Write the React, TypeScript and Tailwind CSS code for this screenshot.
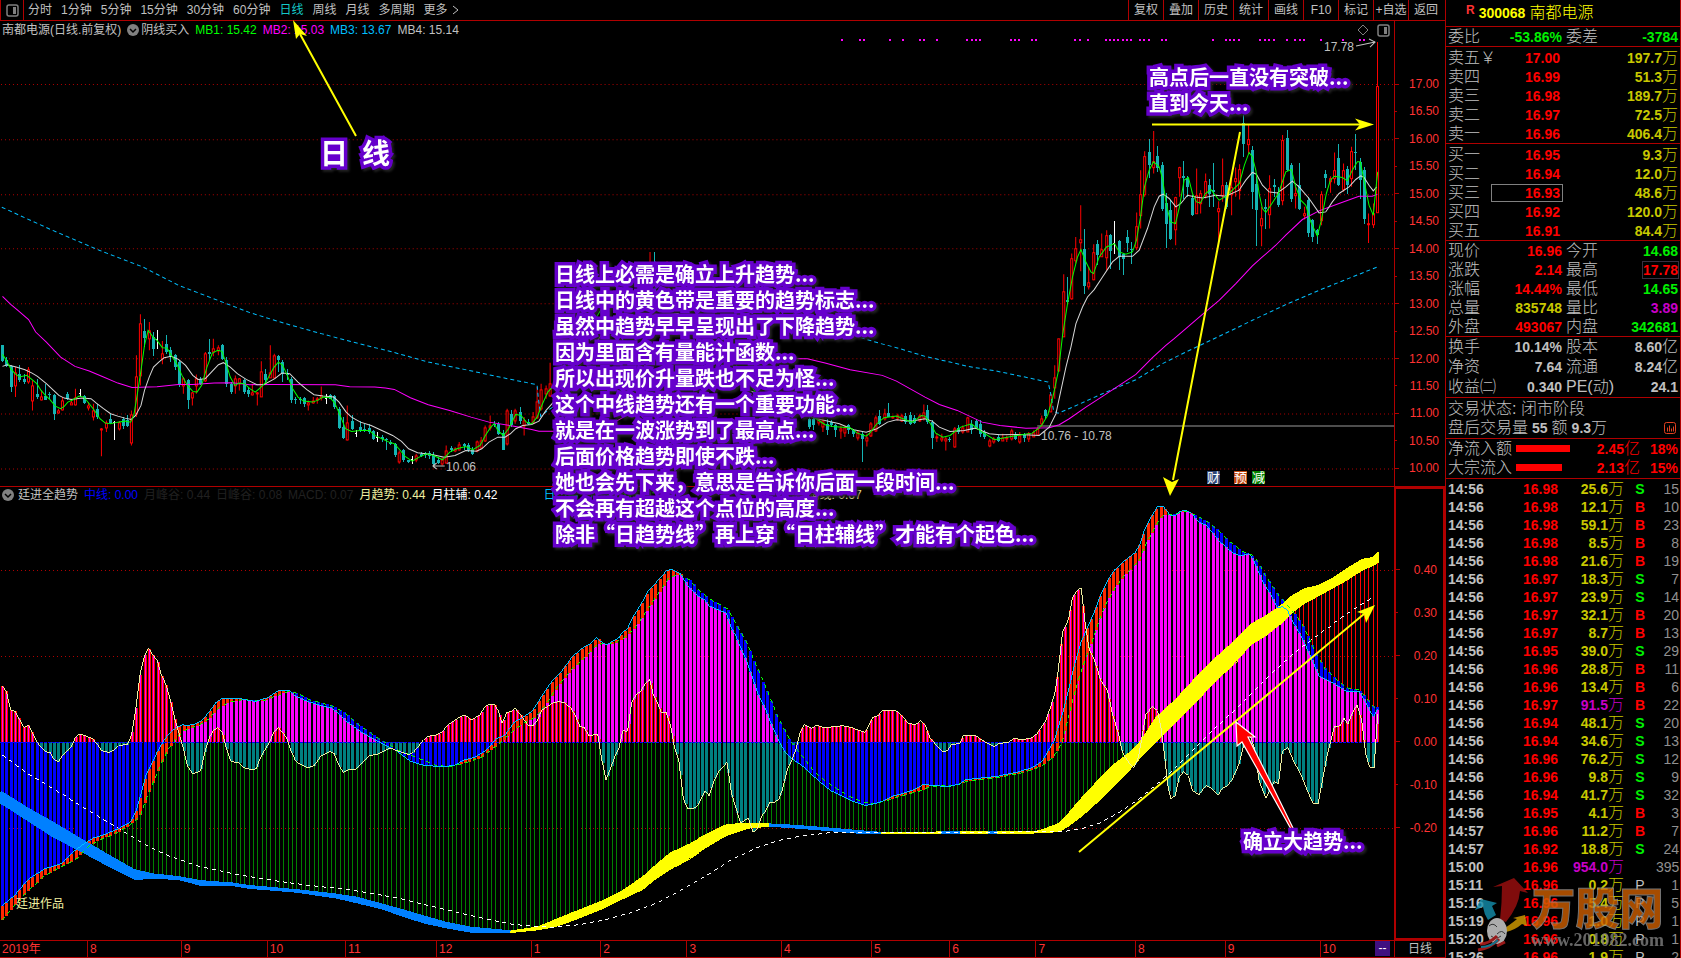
import { ReactNode } from "react";
import clsx from "clsx";

type Pt = [number, number];
type Candle = { x: number; hi: number; lo: number; top: number; bot: number; kind: string };

// points are stored on an enlarged grid: sx units per pixel across, 3 units per pixel down
const track = (ox: number, oy: number, sx: number, raw: string): Pt[] =>
  raw
    .trim()
    .split(/\s+/)
    .map((p) => {
      const [x, y] = p.split(",").map(Number);
      return [ox + x / sx, oy + y / 3];
    });

// kind + high,low,bodyTop,bodyBottom, spread evenly from x0 to x1
const candles = (x0: number, x1: number, oy: number, raw: string): Candle[] => {
  const rows = raw.trim().split(/\s+/);
  return rows.map((r, i) => {
    const [hi, lo, top, bot] = r.slice(1).split(",").map((v) => oy + Number(v) / 3);
    return { x: Math.round(x0 + ((x1 - x0) * i) / (rows.length - 1)), hi, lo, top, bot, kind: r[0] };
  });
};

const valueAt = (pts: Pt[], x: number) => {
  if (x <= pts[0][0]) return pts[0][1];
  for (let i = 1; i < pts.length; i++) {
    if (x <= pts[i][0]) {
      const [ax, ay] = pts[i - 1];
      const [bx, by] = pts[i];
      return bx === ax ? by : ay + ((by - ay) * (x - ax)) / (bx - ax);
    }
  }
  return pts[pts.length - 1][1];
};

const join = (pts: Pt[]) => pts.map((p) => `${p[0].toFixed(1)},${p[1].toFixed(1)}`).join(" ");

const CANDLES: Candle[] = [
  ...candles(2, 550, 250, `
    d283,335,283,332 d320,350,330,348 d345,425,348,410 u350,440,365,405 d345,395,370,390 d370,400,385,395 u350,400,358,395 u390,480,405,450
    d385,445,430,440 u420,450,437,445 d400,450,438,448 d425,445,430,435 d430,508,435,490 u475,490,480,487 u440,480,450,478 d425,450,430,447
    u445,462,455,462 u415,465,440,460 w417,440,427,430 d435,460,437,458 u455,480,465,472 u460,510,480,497 d460,505,475,500 u533,617,533,535
    u510,545,515,530 d490,520,505,518 w513,570,516,519 u512,540,515,532 d500,535,505,528 d495,530,510,528 u480,585,492,575 u315,500,378,490
    u192,405,220,375 d205,290,243,262 u215,300,240,265 d245,318,260,297 w240,297,265,268 u272,342,310,325 d255,310,282,305 d290,335,300,320
    d310,360,315,350 d330,410,335,400 u380,430,385,405 d385,477,390,450 u425,465,427,443 u372,430,385,405 d380,405,385,400 u305,395,310,390
    d267,330,305,312 u265,318,295,305 u285,315,290,300 d280,330,283,325 d320,410,328,400 d395,432,400,425 u375,430,385,405 u383,420,385,400
    d385,430,390,425 d410,440,420,430 u400,435,425,430 u425,465,427,430 u333,440,363,437 d355,395,370,390 u285,380,365,380 u310,385,315,380
    d315,365,316,330 d330,395,335,372 d355,390,368,375 d380,458,387,450 d440,460,447,450 d440,460,445,450 d440,470,442,460 u450,480,455,460
    u440,460,450,455 u440,460,443,447 u408,450,435,440 w430,460,443,446 d430,447,435,445 d435,475,437,470 d470,535,475,533 d500,565,530,562
    u465,570,515,565 d495,540,512,535 w540,560,548,551 d513,545,530,538 d520,545,535,538 d520,550,533,545 d540,570,543,565 w545,575,560,563
    d555,575,560,566 d563,600,565,570 d570,585,575,580 d578,620,580,615 u600,640,605,632 d595,635,600,630 d628,637,630,635 w617,640,627,630
    u610,635,615,628 d605,620,612,617 d605,622,608,615 d603,625,608,618 d605,650,615,642 d620,640,628,638 u620,645,628,640 u585,640,600,635
    d588,605,592,600 u590,605,593,598 u575,600,583,597 d578,600,582,586 d578,605,585,600 d590,615,600,612 u570,605,573,600 u560,595,570,590
    u525,575,530,568 u495,540,525,530 d513,530,520,525 d515,555,520,550 d540,600,548,598 u475,585,480,580 d480,530,490,525 u475,520,480,510
    d470,520,485,513 u500,555,510,525 d505,525,515,520 u485,520,498,517 u410,505,453,500 u400,480,418,475 u405,445,415,430 u337,440,400,437`),
  ...candles(650, 667, 250, `u5,120,60,110 d5,130,60,120 d60,140,70,130 u70,160,90,140 u33,140,60,120`),
  ...candles(810, 1038, 250, `
    d500,535,505,530 d500,540,505,525 u495,525,505,518 u500,545,510,528 d505,555,520,540 d510,530,515,525 d520,560,525,540 u525,565,535,540
    u525,560,530,545 d520,550,525,540 d535,560,540,550 u540,570,545,560 d545,635,550,565 u550,588,562,572 u515,560,520,555 u495,545,500,540
    d480,525,497,520 u475,510,490,505 d457,500,487,500 u495,505,497,500 u490,510,495,500 u490,515,495,510 d487,520,497,515 d485,525,495,520
    d495,520,503,517 u490,515,495,510 u462,510,485,500 d463,520,478,515 d510,595,515,563 u548,575,558,562 u550,575,560,565 u560,600,563,570
    d560,575,565,570 u530,592,535,590 d525,550,533,545 u525,550,530,543 u499,545,500,543 d510,550,520,540 d505,535,512,535 d510,560,520,550
    d540,565,545,560 u565,590,570,585 u560,580,565,575 d555,575,560,572 u550,570,560,568 u555,575,562,566 u535,570,540,565 d545,570,550,565
    u545,580,555,572 d548,575,553,562 u545,575,550,565 u540,560,545,558 u530,555,533,550`),
  ...candles(1042, 1378, 90, `
    u975,1010,985,1000 d955,985,960,978 u910,965,912,962 u825,925,862,892 u745,845,745,842 u552,740,603,738 d560,640,630,634 u490,628,505,625
    u440,520,475,510 u345,543,448,458 d415,610,475,588 u530,598,577,590 u462,570,485,565 d450,525,460,495 u430,500,478,498 u420,540,435,500
    d430,535,435,483 w393,490,458,461 d448,538,453,500 d488,555,490,507 d418,485,440,457 d455,522,475,480 u367,480,408,470 u240,415,313,375
    u183,320,198,312 d148,262,187,225 u123,250,213,230 d168,245,198,235 d215,362,225,355 d308,473,337,402 d330,450,360,447 u320,465,322,418
    u230,320,232,262 d213,325,258,262 d258,320,262,290 d315,378,323,375 u235,370,315,368 u300,370,310,340 u250,325,273,315 d267,350,285,312
    d220,350,300,305 u333,450,353,363 u205,335,285,315 d275,355,283,350 u265,375,290,312 u232,320,265,275 u222,328,238,300 d75,200,100,162
    u105,190,148,163 d168,355,180,305 d260,467,280,360 u350,468,385,405 d325,415,350,355 u255,415,293,370 d267,320,285,290 d290,350,308,343
    u135,345,150,330 d120,243,145,240 d220,335,225,327 u290,355,310,315 d220,358,285,355 u350,388,370,375 d320,440,330,428 d385,455,390,440
    d415,462,420,435 u303,405,312,390 d240,292,252,263 u258,308,263,272 u187,280,240,265 d163,288,205,285 u220,305,240,298 d228,312,237,285
    u170,290,183,265 d132,240,185,190 d205,325,215,270 d232,402,240,387 u370,458,400,403 u340,413,370,403 u-144,367,-12,366`),
];

const MB1: Pt[] = [
  ...track(0, 250, 2.8, `7,312 18,330 30,355 42,370 55,380 75,375 90,388 103,400 115,420 127,435 140,448 155,467 170,475 180,468 190,455 205,448 222,437 235,440
    250,460 265,480 280,505 295,518 310,520 330,515 350,512 366,515 375,495 385,430 395,360 405,285 415,240 430,262 440,270 455,292 468,293 480,315 495,340
    510,375 525,405 540,423 552,425 565,405 580,350 595,308 610,300 622,303 634,340 645,380 658,405 670,398 685,400 700,415 715,425 730,412 745,395 755,375
    768,350 780,335 792,345 805,375 820,415 835,440 850,452 875,455 890,450 905,440 925,442 938,458 955,500 968,535 985,543 1010,540 1035,540 1050,555
    1070,565 1090,575 1105,580 1120,598 1135,618 1155,632 1175,620 1195,610 1215,615 1240,628 1260,605 1280,595 1305,588 1325,598 1345,585 1360,555
    1375,530 1385,520 1395,540 1410,555 1425,535 1445,492 1460,495 1475,515 1490,520 1505,500 1520,460 1535,425 1560,395 1700,150 1850,120 2000,250 2120,430`),
  ...track(540, 250, 2.8, `775,505 800,523 820,528 850,530 870,532 890,548 915,557 925,548 945,520 965,502 1000,497 1030,510 1045,515 1070,495 1080,497 1095,520
    1110,548 1130,560 1150,555 1180,530 1210,520 1240,545 1275,568 1310,560 1350,553 1380,548 1397,535`),
  ...track(1020, 90, 3, `67,1005 85,975 100,925 118,840 130,735 145,640 160,560 175,500 185,478 200,515 215,545 223,550 240,500 262,470 286,460 300,485 320,492
    340,485 352,450 364,380 376,290 390,240 403,215 420,230 430,265 442,345 454,395 469,400 481,350 495,270 508,262 520,310 532,335 544,338 559,310 575,298
    600,330 622,318 640,300 661,280 676,225 690,187 700,200 710,240 720,310 730,355 740,367 755,345 778,310 800,245 817,238 830,290 845,330 860,345 875,395
    895,437 907,390 922,310 934,270 946,258 970,262 985,272 1000,240 1015,215 1024,215 1036,275 1050,345 1063,375 1070,300 1076,245`),
];

const MB4: Pt[] = [
  ...track(0, 250, 2.8, `7,348 20,343 45,350 70,358 90,368 105,378 130,400 150,420 165,435 180,443 200,447 230,443 255,445 270,458 290,475 310,490 330,497
    350,503 368,507 380,495 395,465 405,420 418,380 430,350 445,335 460,322 480,318 500,327 520,345 540,375 555,387 575,385 595,362 612,343 626,337 645,350
    665,370 690,387 720,403 740,402 770,385 790,368 812,370 835,395 860,418 880,433 905,437 935,440 950,455 970,485 985,500 1010,515 1040,525 1070,540
    1100,555 1125,573 1145,595 1170,607 1210,612 1245,620 1275,615 1305,600 1335,602 1350,595 1370,575 1395,560 1415,560 1430,550 1445,535 1465,525
    1490,522 1510,512 1530,480 1560,445 1720,200 1900,190 2100,420`),
  ...track(540, 250, 2.8, `770,503 800,510 840,520 880,538 915,545 945,535 975,515 1000,508 1040,512 1080,505 1100,512 1120,530 1150,543 1190,540 1220,533
    1260,550 1290,553 1340,552`),
  ...track(1020, 90, 3, `0,1032 60,1035 90,1010 110,970 125,900 140,830 155,770 170,700 190,650 205,620 225,598 250,560 280,515 300,498 340,498 360,480 385,415
    405,350 420,318 432,312 450,325 470,350 485,340 505,315 530,320 550,323 590,315 620,318 660,300 680,270 700,247 712,252 730,285 750,305 775,308 800,290
    820,273 840,290 870,325 900,368 920,365 940,335 960,310 990,290 1010,268 1025,257 1035,262 1050,285 1063,302 1073,290`),
];

const MB2: Pt[] = [
  ...track(0, 250, 2.8, `7,138 30,162 50,180 80,208 100,245 130,275 170,320 210,348 250,362 290,380 330,398 370,411 440,409 500,402 540,402 600,398 650,397
    700,403 760,402 940,403 980,409 1050,410 1080,413 1105,417 1150,442 1200,463 1260,480 1320,500 1370,515 1440,527 1490,537 1510,542 1560,542`),
  ...track(540, 250, 2.8, `215,512 480,357 600,325 725,325 750,325 800,338 870,358 960,375 1000,392 1050,422 1080,440 1120,462 1170,480 1240,515 1290,525
    1350,532`),
  ...track(1020, 90, 3, `20,1013 90,1012 120,1003 150,985 200,950 250,918 300,885 350,852 400,802 440,765 465,745 500,715 550,672 600,630 650,580 700,527 730,500
    770,465 800,435 850,388 900,362 960,340 1020,318 1060,318 1075,312`),
];

const MB3_LEFT = track(0, 250, 2.8, `5,-129 140,-63 278,0 400,50 500,105 630,158 700,187 800,220 900,250 1000,278 1100,305 1200,335 1300,357 1400,380 1500,402
  1505,405 1508,440 1515,498 1535,480 1556,465`);
const MB3_RIGHT: Pt[] = [
  ...track(540, 250, 2.8, `900,262 950,278 1000,292 1080,318 1150,335 1200,348 1280,362 1360,380 1425,395 1432,430 1440,480 1450,488`),
  ...track(1020, 90, 3, `118,968 160,950 250,910 350,868 430,820 500,785 600,738 700,690 800,643 900,600 1000,560 1075,530`),
];

const SIGNALS = [
  842, 860, 864, 890, 903, 920, 924, 937, 967, 972, 976, 980, 1011, 1015, 1019, 1032, 1036, 1075, 1080, 1088, 1106, 1110, 1114, 1118, 1123, 1127, 1131,
  1140, 1144, 1149, 1162, 1166, 1213, 1226, 1230, 1234, 1239, 1260, 1265, 1269, 1274, 1287, 1295, 1300, 1304, 1321, 1343, 1360, 1364,
];

const MONTH: Pt[] = [
  ...track(0, 640, 2.8, `7,135 18,153 30,207 43,212 55,237 67,260 80,253 92,280 103,303 115,320 127,333 140,335 150,355 163,364 175,345 187,330 199,320 211,290
    222,280 240,285 260,295 272,310 285,330 305,335 320,328 332,315 345,313 357,312 368,285 380,210 393,95 405,45 416,22 430,45 442,62 453,103 466,135
    478,180 490,235 502,280 513,320 525,375 540,400 552,395 562,390 575,330 587,290 598,270 610,260 622,272 634,320 646,360 658,365 670,366 682,380 706,388
    718,384 730,350 742,328 755,305 768,273 780,260 792,277 803,290 815,330 828,360 840,370 862,382 880,375 900,345 925,332 936,338 948,370 962,396 975,388
    998,385 1015,365 1034,345 1060,340 1094,322 1120,333 1145,342 1158,335 1170,320 1187,297 1200,287 1225,282 1240,272 1255,253 1275,238 1298,223
    1310,228 1322,238 1345,222 1358,198 1372,190 1385,190 1396,210 1407,248 1420,215 1432,213 1443,203 1458,220 1470,240 1480,253 1495,253 1505,240
    1520,205 1545,188`),
  ...track(500, 540, 2.8, `165,482 180,485 200,502 212,525 225,558 237,560 250,585 275,580 285,650 298,718 310,685 322,650 335,620 345,570 358,572 370,487
    382,462 395,452 407,430 420,415 430,460 442,485 453,515 467,515 480,560 490,620 502,660 515,775 527,805 542,805 555,795 575,750 587,765 600,722 612,695
    637,665 650,760 662,800 675,848 697,832 710,875 722,865 735,825 745,812 757,785 770,785 783,775 793,745 805,690 820,655 832,620 842,575 853,552 875,563
    888,553 905,562 960,555 985,560 1010,570 1025,575 1045,530 1060,525 1072,510 1105,508 1118,515 1145,547 1165,552 1180,540 1192,552 1205,590 1217,605
    1230,622 1242,632 1255,630 1265,612 1290,608 1300,583 1325,583 1340,590 1360,603 1385,618 1400,608 1425,605 1443,592 1460,598 1490,592 1505,580
    1530,540 1545,495 1556,455`),
  ...track(1000, 480, 3, `178,560 190,455 208,415 220,350 235,327 246,322 258,430 270,505 285,535 305,600 325,630 340,700 358,760 370,815 385,840 403,862
    418,830 430,760 440,700 460,678 475,690 485,740 497,830 505,910 515,955 528,945 540,890 553,873 568,885 580,930 600,942 620,915 640,925 657,943 668,925
    685,915 700,895 720,850 735,790 748,750 765,800 780,900 800,952 812,930 826,903 838,910 850,812 866,800 885,845 905,880 925,930 942,968 957,970 970,900
    985,820 997,775 1006,738 1023,735 1034,712 1047,730 1058,700 1074,672 1088,720 1100,820 1112,860 1125,862 1136,700`),
];

const TREND: Pt[] = [
  ...track(0, 640, 2.8, `7,795 40,765 80,715 125,685 170,670 215,625 245,603 262,592 290,583 330,565 365,545 380,515 395,460 410,400 425,370 440,335 460,297
    480,272 500,257 513,252 525,255 545,250 565,240 585,215 605,185 622,173 670,173 715,182 752,170 780,149 808,148 830,167 862,182 895,193 930,202 945,215
    975,245 1010,272 1060,303 1110,330 1150,362 1185,373 1240,379 1275,373 1300,358 1330,350 1360,330 1390,295 1415,283 1440,245 1465,230 1490,212
    1510,180 1540,130`),
  ...track(500, 540, 2.8, `167,398 200,350 237,318 255,308 272,290 285,303 300,312 335,290 345,272 358,265 370,235 395,192 418,147 440,123 467,90 480,85 505,97
    527,135 555,165 575,178 587,195 635,217 650,262 662,285 675,320 690,355 710,415 722,455 745,505 765,560 785,605 800,635 820,655 850,677 890,717 930,752
    980,778 1025,795 1065,785 1100,767 1140,755 1165,745 1190,730 1210,735 1260,737 1290,730 1305,717 1350,712 1396,707`),
  ...track(1000, 480, 3, `0,885 60,873 100,860 130,840 150,805 165,780 180,730 195,680 210,620 225,555 245,485 265,440 285,395 305,340 325,300 345,268 385,232
    408,215 422,190 435,150 455,110 475,77 492,76 505,92 515,105 530,103 540,92 560,88 575,95 590,113 605,127 620,132 640,155 660,180 700,215 725,225
    750,218 762,235 775,265 795,310 815,340 835,380 850,378 865,388 880,420 900,455 920,495 940,540 960,585 1005,608 1045,633 1080,632 1095,655 1110,685
    1123,708 1136,685`),
];

const SIGNAL: Pt[] = [
  ...track(0, 640, 2.8, `7,838 40,795 80,750 125,705 170,680 215,655 245,620 270,603 330,575 375,545 395,520 415,460 435,410 455,360 475,320 500,285 520,268
    560,253 585,235 610,205 640,185 680,177 740,180 775,165 808,152 835,158 870,178 930,195 965,215 1000,248 1060,293 1110,325 1165,350 1225,375 1260,377
    1300,368 1350,350 1385,320 1410,298 1440,268 1470,245 1500,230 1530,190`),
  ...track(500, 540, 2.8, `167,430 200,388 240,348 275,310 320,308 350,290 380,260 415,205 440,165 475,110 503,100 530,115 560,150 590,175 640,205 660,245
    690,300 720,375 750,450 780,530 815,600 850,650 880,690 910,720 960,755 1000,777 1040,790 1080,782 1120,768 1180,750 1210,737 1280,733 1310,722
    1360,715 1396,710`),
  ...track(1000, 480, 3, `0,890 60,878 100,867 130,855 150,840 165,825 180,800 190,780 205,720 220,660 240,590 260,530 280,480 300,420 320,370 345,325 375,285
    420,240 440,190 475,125 495,102 520,100 560,92 590,103 630,125 660,150 690,180 730,212 755,220 775,240 800,285 840,345 880,390 910,430 950,515 975,560
    1005,590 1040,620 1080,628 1110,660 1125,680 1137,680`),
];

const RIBBON_TOP: Pt[] = [
  ...track(0, 640, 2.8, `5,453 80,503 150,545 240,603 300,640 378,688 430,700 500,708 560,720 650,727 700,735 755,740 830,747 940,760 1000,770 1070,790
    1130,808 1190,827 1250,845 1320,860 1430,871`),
  ...track(500, 540, 2.8, `105,1160 150,1140 200,1118 285,1082 345,1050 405,1005 430,980 480,935 530,910 580,880 635,852 700,847 755,850 800,852 900,860
    1030,872 1070,875 1396,873`),
  ...track(1000, 480, 3, `110,1052 130,1047 180,1028 210,995 250,948 300,895 345,850 385,820 425,780 470,710 530,655 590,590 650,530 700,485 755,430 800,405
    850,370 880,343 920,322 955,315 1000,292 1040,265 1090,235 1120,230 1137,212`),
];

const RIBBON_BOTTOM: Pt[] = [
  ...track(0, 640, 2.8, `5,490 80,542 150,590 240,640 300,675 378,717 430,713 500,717 560,734 650,735 700,744 755,748 830,755 940,772 1000,787 1070,805
    1130,828 1190,848 1250,862 1320,875 1430,876`),
  ...track(500, 540, 2.8, `105,1168 150,1160 200,1142 285,1106 345,1075 405,1045 430,1020 480,985 530,955 580,920 635,885 700,862 755,857 800,860 900,868
    1030,880 1070,880 1396,878`),
  ...track(1000, 480, 3, `110,1057 130,1056 180,1053 210,1035 250,1005 300,960 345,915 385,875 425,830 470,785 530,725 590,665 650,600 700,555 755,492 800,465
    850,425 880,395 920,365 955,347 1000,322 1040,300 1090,268 1120,255 1137,245`),
];

const MIDLINE: Pt[] = [
  ...track(0, 640, 2.8, `7,343 75,397 150,445 240,505 330,562 400,608 470,645 560,678 670,703 780,722 870,735 970,746 1050,760 1120,774 1200,795 1280,815
    1360,835 1440,852 1500,857`),
  ...track(500, 540, 2.8, `150,1160 220,1153 300,1137 370,1115 440,1088 520,1042 580,1005 650,957 720,922 780,900 840,887 920,877 960,875 1396,875`),
  ...track(1000, 480, 3, `130,1053 190,1053 245,1045 300,1028 360,995 420,955 480,905 530,860 590,800 650,740 700,695 760,635 820,575 900,505 960,460 1020,415
    1080,375 1125,348`),
];

const RIBBON_SPANS: [number, number, string][] = [
  [1, 511, "#0080ff"],
  [511, 770, "#ffff00"],
  [770, 882, "#0080ff"],
  [882, 942, "#ffff00"],
  [942, 961, "#0080ff"],
  [961, 989, "#ffff00"],
  [989, 998, "#0080ff"],
  [998, 1379, "#ffff00"],
];

const ribbonPath = (from: number, to: number) => {
  const xs: number[] = [];
  for (let x = from; x < to; x += 3) xs.push(x);
  xs.push(to);
  const top = xs.map((x) => `${x},${valueAt(RIBBON_TOP, x).toFixed(1)}`);
  const bottom = xs.reverse().map((x) => `${x},${valueAt(RIBBON_BOTTOM, x).toFixed(1)}`);
  return [...top, ...bottom].join(" ");
};

const ZERO = 741;
const BARS = Array.from({ length: 319 }, (_, i) => Math.round(2 + (i * 1376) / 318));

const PERIODS = ["分时", "1分钟", "5分钟", "15分钟", "30分钟", "60分钟", "日线", "周线", "月线", "多周期"];
const TOOLS = ["复权", "叠加", "历史", "统计", "画线", "F10", "标记", "+自选", "返回"];

const MONTHS: [string, number, number][] = [
  ["2019年", 0, 88],
  ["8", 88, 182],
  ["9", 182, 268],
  ["10", 268, 346],
  ["11", 346, 437],
  ["12", 437, 532],
  ["1", 532, 601],
  ["2", 601, 687],
  ["3", 687, 782],
  ["4", 782, 872],
  ["5", 872, 950],
  ["6", 950, 1036],
  ["7", 1036, 1136],
  ["8", 1136, 1226],
  ["9", 1226, 1321],
  ["10", 1321, 1395],
];

const ASKS = [
  ["卖五￥", "17.00", "197.7"],
  ["卖四", "16.99", "51.3"],
  ["卖三", "16.98", "189.7"],
  ["卖二", "16.97", "72.5"],
  ["卖一", "16.96", "406.4"],
];
const BIDS = [
  ["买一", "16.95", "9.3"],
  ["买二", "16.94", "12.0"],
  ["买三", "16.93", "48.6"],
  ["买四", "16.92", "120.0"],
  ["买五", "16.91", "84.4"],
];

const RED = "text-[#ff0000]";
const GREEN = "text-[#00f000]";
const YELLOW = "text-[#c8c800]";
const PURPLE = "text-[#c800c8]";
const GREY = "text-[#c0c0c0]";

const QUOTE = [
  ["现价", "16.96", RED, "今开", "14.68", GREEN],
  ["涨跌", "2.14", RED, "最高", "17.78", RED],
  ["涨幅", "14.44%", RED, "最低", "14.65", GREEN],
  ["总量", "835748", YELLOW, "量比", "3.89", PURPLE],
  ["外盘", "493067", RED, "内盘", "342681", GREEN],
];
const BASICS = [
  ["换手", "10.14%", GREY, "股本", "8.60亿", GREY],
  ["净资", "7.64", GREY, "流通", "8.24亿", GREY],
  ["收益㈡", "0.340", GREY, "PE(动)", "24.1", GREY],
];

const TRADES = `14:56 16.98 25.6 S 15|14:56 16.98 12.1 B 10|14:56 16.98 59.1 B 23|14:56 16.98 8.5 B 8|14:56 16.98 21.6 B 19|14:56 16.97 18.3 S 7
14:56 16.97 23.9 S 14|14:56 16.97 32.1 B 20|14:56 16.97 8.7 B 13|14:56 16.95 39.0 S 29|14:56 16.96 28.8 B 11|14:56 16.96 13.4 B 6
14:56 16.97 91.5 B 22|14:56 16.94 48.1 S 20|14:56 16.94 34.6 S 13|14:56 16.96 76.2 S 12|14:56 16.96 9.8 S 9|14:56 16.94 41.7 S 32
14:56 16.95 4.1 B 3|14:57 16.96 11.2 B 7|14:57 16.92 18.8 S 24|15:00 16.96 954.0 - 395|15:11 16.96 0.2 P 1|15:16 16.96 5.4 P 5
15:19 16.96 1.0 P 1|15:20 16.96 0.8 P 1|15:26 16.96 1.9 P 2`
  .split(/[|\n]/)
  .map((r) => r.split(" "));

const NOTE = [
  "日线上必需是确立上升趋势...",
  "日线中的黄色带是重要的趋势标志...",
  "虽然中趋势早早呈现出了下降趋势...",
  "因为里面含有量能计函数...",
  "所以出现价升量跌也不足为怪...",
  "这个中线趋势还有一个重要功能...",
  "就是在一波涨势到了最高点...",
  "后面价格趋势即使不跌...",
  "她也会先下来，意思是告诉你后面一段时间...",
  "不会再有超越这个点位的高度...",
  "除非“日趋势线”再上穿“日柱辅线”才能有个起色...",
];

function PanelIcon() {
  return (
    <svg width="13" height="13" viewBox="0 0 13 13" fill="none" stroke="#808080">
      <rect x="1" y="1" width="11" height="11" rx="2" strokeWidth="1.5" />
      <rect x="7" y="3" width="3" height="7" fill="#808080" stroke="none" />
    </svg>
  );
}

function ChevronBadge() {
  return (
    <svg width="12" height="12" viewBox="0 0 12 12" className="shrink-0">
      <circle cx="6" cy="6" r="6" fill="#808080" />
      <path d="M3 5l3 3 3-3" stroke="#000" strokeWidth="1.5" fill="none" />
    </svg>
  );
}

function Callout({ className, children }: { className: string; children: ReactNode }) {
  return (
    <div
      className={clsx(
        "absolute whitespace-nowrap font-['Noto_Sans_CJK_SC',sans-serif] font-bold text-white [paint-order:stroke_fill] [-webkit-text-stroke:7px_#6600cc] drop-shadow-[2px_2px_1px_#222]",
        className,
      )}
    >
      {children}
    </div>
  );
}

function PriceChart() {
  return (
    <svg className="absolute inset-0 size-full" viewBox="0 21 1395 464" preserveAspectRatio="none" shapeRendering="crispEdges" fill="none">
      {[84, 139, 194, 248, 303, 358, 413, 468].map((y) => (
        <line key={y} x1="1" x2="1395" y1={y + 0.5} y2={y + 0.5} stroke="#b00000" strokeDasharray="1 3" />
      ))}
      {SIGNALS.map((x) => (
        <rect key={x} x={x} y="39" width="2" height="2" fill="#ff00ff" />
      ))}
      <line x1="1038" x2="1395" y1="425.5" y2="425.5" stroke="#999" />
      {CANDLES.map((c, i) => {
        const h = Math.max(1, c.bot - c.top);
        if (c.kind === "u") {
          return (
            <g key={i} stroke="#ff0000">
              <line x1={c.x + 0.5} x2={c.x + 0.5} y1={c.hi} y2={c.lo} />
              <rect x={c.x - 0.5} y={Math.round(c.top) + 0.5} width="2" height={Math.round(h)} fill="#000" />
            </g>
          );
        }
        const color = c.kind === "d" ? "#14b4b4" : "#fff";
        return (
          <g key={i} fill={color}>
            <rect x={c.x} y={c.hi} width="1" height={c.lo - c.hi} />
            <rect x={c.x - 1} y={c.top} width={c.kind === "d" ? 3 : 1} height={h} />
          </g>
        );
      })}
      <polyline points={join(MB3_LEFT)} stroke="#00bfff" strokeDasharray="4 3" />
      <polyline points={join(MB3_RIGHT)} stroke="#00bfff" strokeDasharray="4 3" />
      <polyline points={join(MB2)} stroke="#ff00ff" />
      <polyline points={join(MB4)} stroke="#d8d8d8" />
      <polyline points={join(MB1)} stroke="#00ff00" />
      <g stroke="#c0c0c0">
        <path d="M433 465.5h12M433 465.5l4 -3M433 465.5l4 3" />
        <path d="M1357 46l19 -4M1370 39l6 3l-5 5" />
      </g>
    </svg>
  );
}

function TrendChart() {
  return (
    <svg className="absolute inset-0 size-full" viewBox="0 486 1395 454" preserveAspectRatio="none" shapeRendering="crispEdges" fill="none">
      {[569, 655, 827].map((y) => (
        <line key={y} x1="1" x2="1395" y1={y + 0.5} y2={y + 0.5} stroke="#b00000" strokeDasharray="1 3" />
      ))}
      {BARS.map((x) => {
        const trend = valueAt(TREND, x);
        const lag = valueAt(SIGNAL, x);
        const band = valueAt(RIBBON_TOP, x);
        const month = valueAt(MONTH, x);
        return (
          <g key={x}>
            <rect x={x} y={Math.min(band, ZERO)} width="1" height={Math.abs(band - ZERO)} fill={band > ZERO ? "#008000" : "#ff0000"} />
            <rect x={x - 1} y={Math.min(trend, ZERO)} width="3" height={Math.abs(trend - ZERO)} fill={trend < ZERO ? "#ff00ff" : "#0000ff"} />
            {month < ZERO ? (
              <>
                <rect x={x - 1} y={month} width="3" height={ZERO - month} fill="#ff0000" />
                <rect x={x} y={month} width="1" height={ZERO - month} fill="#ff00ff" />
              </>
            ) : (
              <rect x={x - 1} y={ZERO} width="3" height={month - ZERO} fill="#008080" />
            )}
            <rect x={x - 1} y={Math.min(trend, lag)} width="3" height={Math.abs(trend - lag)} fill={trend < lag ? "#ff2800" : "#0000ff"} />
          </g>
        );
      })}
      <line x1="0" x2="1379" y1={ZERO + 0.5} y2={ZERO + 0.5} stroke="#0000ff" strokeDasharray="3 1" />
      {RIBBON_SPANS.map(([a, b, color]) => (
        <polygon key={a} points={ribbonPath(a, b)} fill={color} stroke={color} strokeWidth="1" />
      ))}
      <polyline points={join(MIDLINE)} stroke="#fff" strokeDasharray="4 4" />
      <polyline points={join(SIGNAL)} stroke="#00ff00" strokeDasharray="4 4" />
      <polyline points={join(TREND)} stroke="#00bfff" />
      <polyline points={join(MONTH)} stroke="#f0f0a0" />
    </svg>
  );
}

function Axis({ values, className }: { values: string[]; className: string }) {
  return (
    <div className={clsx("flex w-[51px] shrink-0 flex-col justify-between border-[#b00000] pr-1.5 text-[#ff3232]", className)}>
      {values.map((v, i) => (
        <div key={v} className="flex h-4 items-center justify-between text-xs leading-4">
          <i className={clsx("h-px bg-[#b00000]", i % 2 === 0 ? "w-1" : "w-0.5")} />
          {v}
        </div>
      ))}
    </div>
  );
}

function BookTable({ rows, label }: { rows: string[][]; label: string }) {
  return (
    <div className="border-b border-[#b00000] pt-px">
      <table aria-label={label} className="w-full table-fixed leading-4">
        <tbody>
          {rows.map(([name, price, volume]) => (
            <tr key={name} className="h-[19px]">
              <th scope="row" className="w-[46px] whitespace-nowrap p-0 pl-0.5 text-left text-base leading-4 font-light">{name}</th>
              <td className={clsx("w-[70px] p-0 text-right text-sm leading-4 font-bold", RED)}>
                <span className={clsx("block pr-0.5", name === "买三" && "outline outline-[#808080]")}>{price}</span>
              </td>
              <td className="p-0 pr-0.5">
                <div className={clsx("flex h-4 items-center justify-end text-sm leading-4 font-bold", YELLOW)}>
                  {volume}
                  <span className="text-base leading-4 font-light">万</span>
                </div>
              </td>
            </tr>
          ))}
        </tbody>
      </table>
    </div>
  );
}

function PairTable({ rows, label, rowClass = "h-[19px]" }: { rows: string[][]; label: string; rowClass?: string }) {
  return (
    <div className="border-b border-[#b00000]">
      <table aria-label={label} className="w-full table-fixed leading-4">
        <tbody>
          {rows.map(([a, av, ac, b, bv, bc]) => (
            <tr key={a} className={rowClass}>
              <th scope="row" className="w-12 whitespace-nowrap p-0 pl-0.5 text-left text-base leading-4 font-light">{a}</th>
              <td className={clsx("w-[68px] p-0 text-right text-sm leading-4 font-bold", ac)}>{av}</td>
              <th scope="row" className="w-[52px] whitespace-nowrap p-0 pl-1 text-left text-base leading-4 font-light">{b}</th>
              <td className="p-0 pr-0.5">
                <div className={clsx("flex h-4 items-center justify-end text-sm leading-4 font-bold", bc)}>
                  <span className={clsx(b === "最高" && "outline outline-[#383040]")}>{bv.replace("亿", "")}</span>
                  {bv.includes("亿") && <span className="text-base leading-4 font-light">亿</span>}
                </div>
              </td>
            </tr>
          ))}
        </tbody>
      </table>
    </div>
  );
}

function Watermark() {
  return (
    <div className="absolute right-4 bottom-1 flex items-end opacity-80">
      <svg width="56" height="76" viewBox="0 0 56 76">
        <path d="M18 9L39 0L53 15L45 13Q44 28 31 44L25 42Q27 24 27 8Z" fill="#a01010" />
        <path d="M0 32L6 21L22 25L17 28L21 37L13 42Q9 36 8 29Z" fill="#1490b0" />
        <path d="M30 50Q40 43 42 41L38 40L50 37L52 48L47 46Q40 52 31 54Z" fill="#d8a000" />
        <ellipse cx="22" cy="53" rx="10" ry="13" fill="#d8d8d8" />
        <path d="M14 48q4 -4 8 1M22 56q5 -5 8 0M16 58q5 4 10 0" stroke="#444" fill="none" />
        <path d="M5 66Q14 66 22 58M3 72Q16 70 24 61M22 68l8 -4" stroke="#c02020" strokeWidth="3" fill="none" />
        <path d="M6 69Q16 69 23 62" stroke="#1490b0" strokeWidth="2" fill="none" />
      </svg>
      <div className="mb-1 flex flex-col items-center">
        <span className="text-[44px] leading-10 font-black text-[#d06000] [-webkit-text-stroke:1px_#909090]">万股网</span>
        <span className="font-['Liberation_Serif',serif] text-lg leading-5 font-bold text-[#808080]">www.201082.com</span>
      </div>
    </div>
  );
}

function QuotePanel() {
  return (
    <aside className="relative w-[236px] shrink-0 overflow-hidden border-x border-[#b00000]">
      <header className="flex h-[27px] items-center gap-1 border-b border-[#b00000] pl-5 text-[#ffff00]">
        <span className="self-start pt-0.5 text-xs leading-4 font-bold text-[#ff3232]">R</span>
        <b className="text-sm">300068</b>
        <span className="text-base font-light">南都电源</span>
      </header>
      <PairTable label="委托" rows={[["委比", "-53.86%", GREEN, "委差", "-3784", GREEN]]} />
      <BookTable label="卖盘" rows={ASKS} />
      <BookTable label="买盘" rows={BIDS} />
      <PairTable label="行情" rows={QUOTE} />
      <PairTable label="基本" rows={BASICS} rowClass="h-5" />
      <div className="relative border-b border-[#b00000] py-px pl-0.5 text-base leading-[19px] font-light">
        <p className="h-[19px]">交易状态: 闭市阶段</p>
        <p className="flex h-[19px] items-center gap-1">
          盘后交易量 <span className="text-sm font-bold">55</span> 额{" "}
          <span>
            <span className="text-sm font-bold">9.3</span>万
          </span>
        </p>
        <svg className="absolute right-1 bottom-1" width="12" height="12" viewBox="0 0 12 12" fill="none" stroke="#e04020">
          <rect x="0.5" y="0.5" width="11" height="11" rx="2" />
          <path d="M3.5 9.5v-4M5.5 9.5v-6M7.5 9.5v-3M9.5 9.5v-5" />
        </svg>
      </div>
      <div className="border-b border-[#b00000] pb-px">
        {[
          ["净流入额", "w-[54px]", "2.45", "18%"],
          ["大宗流入", "w-[46px]", "2.13", "15%"],
        ].map(([name, width, amount, share]) => (
          <div key={name} className={clsx("flex h-[19px] items-center px-0.5 text-sm leading-4 font-bold", RED)}>
            <span className={clsx("mr-1 text-base leading-4 font-light", GREY)}>{name}</span>
            <i className={clsx("h-[7px] bg-[#ff0000]", width)} />
            <span className="ml-auto">{amount}</span>
            <span className="text-base leading-4 font-light">亿</span>
            <span className="w-[38px] text-right">{share}</span>
          </div>
        ))}
      </div>
      <table aria-label="成交明细" className="mt-px w-full table-fixed text-sm leading-4 font-bold">
        <tbody>
          {TRADES.map(([time, price, volume, side, count], i) => (
            <tr key={i} className="h-[18px]">
              <td className="w-[46px] p-0 pl-0.5">{time}</td>
              <td className={clsx("w-[66px] p-0 text-right", RED)}>{price}</td>
              <td className="w-[66px] p-0">
                <div className={clsx("flex h-4 items-center justify-end", Number(volume) > 90 ? PURPLE : YELLOW)}>
                  {volume}
                  <span className="text-base leading-4 font-light">万</span>
                </div>
              </td>
              <td className={clsx("w-[32px] p-0 text-center", side === "S" && GREEN, side === "B" && RED, side === "P" && "font-normal")}>
                {side !== "-" && side}
              </td>
              <td className="p-0 pr-px text-right font-normal text-[#909090]">{count}</td>
            </tr>
          ))}
        </tbody>
      </table>
      <Watermark />
    </aside>
  );
}

export default function App() {
  const prices = Array.from({ length: 15 }, (_, i) => (17 - i * 0.5).toFixed(2));
  const levels = ["0.40", "0.30", "0.20", "0.10", "0.00", "-0.10", "-0.20"];

  return (
    <div className="flex h-screen overflow-hidden bg-black font-['Liberation_Sans','Noto_Sans_CJK_SC',sans-serif] text-[#c0c0c0]">
      <main className="relative flex min-w-0 flex-1 flex-col">
        <nav className="flex h-[21px] shrink-0 items-center border-b border-[#b00000] text-xs">
          <button aria-label="布局" className="flex h-full w-6 items-center justify-center border-x border-[#b00000]">
            <PanelIcon />
          </button>
          <div className="flex gap-[9px] pl-1">
            {PERIODS.map((p) => (
              <button key={p} className={clsx("whitespace-nowrap", p === "日线" && "text-[#14c8c8]")}>
                {p}
              </button>
            ))}
            <button className="flex items-center gap-1">
              更多
              <svg width="7" height="10" viewBox="0 0 7 10" fill="none" stroke="#c0c0c0">
                <path d="M1 1l5 4-5 4" />
              </svg>
            </button>
          </div>
          <div className="ml-auto flex h-full pr-0.5">
            {TOOLS.map((t) => (
              <button key={t} className="h-full w-[35px] whitespace-nowrap border-l border-[#b00000]">
                {t}
              </button>
            ))}
          </div>
        </nav>

        <section className="flex min-h-0 flex-[465] border-b border-[#b00000]">
          <div className="relative min-w-0 flex-1">
            <PriceChart />
            <div className="relative flex items-center gap-1.5 pl-0.5 text-xs leading-[18px]">
              <h1>南都电源(日线.前复权)</h1>
              <span className="flex items-center gap-0.5">
                <ChevronBadge />
                阴线买入
              </span>
              <span className="text-[#00ff00]">MB1: 15.42</span>
              <span className="text-[#ff00ff]">MB2: 15.03</span>
              <span className="text-[#00bfff]">MB3: 13.67</span>
              <span>MB4: 15.14</span>
              <span className="ml-auto flex items-center gap-2 pr-1">
                <svg width="12" height="12" viewBox="0 0 12 12" fill="none" stroke="#808080">
                  <path d="M6 1l5 5-5 5-5-5z" />
                </svg>
                <PanelIcon />
              </span>
            </div>
          </div>
          <Axis values={prices} className="border-l pt-[55px] pb-[9px]" />
        </section>

        <section className="flex min-h-0 flex-[454]">
          <div className="relative min-w-0 flex-1">
            <TrendChart />
            <div className="relative flex items-center gap-1.5 pl-0.5 text-xs leading-4 whitespace-nowrap">
              <span className="flex items-center gap-1">
                <ChevronBadge />
                廷进全趋势
              </span>
              <span className="text-[#0000ff]">中线: 0.00</span>
              <span className="text-[#202020]">月峰谷: 0.44</span>
              <span className="text-[#202020]">日峰谷: 0.08</span>
              <span className="text-[#202020]">MACD: 0.07</span>
              <span className="text-[#f0f0a0]">月趋势: 0.44</span>
              <span className="text-white">月柱辅: 0.42</span>
              <span className="pl-10 text-[#00bfff]">日趋势: 0.08</span>
              <span className="text-[#00ff00]">日柱辅: 0.08</span>
              <span className="pl-24 text-[#f0f0a0]">日柱辅线: 0.67</span>
            </div>
            <span className="absolute bottom-7 left-4 text-xs text-[#f0f0a0]">廷进作品</span>
          </div>
          <Axis values={levels} className="border-2 pt-[73px] pb-[102px]" />
        </section>

        <footer className="flex h-[18px] shrink-0 border-y border-[#b00000] text-xs leading-4 text-[#ff3232]">
          <div className="flex min-w-0 flex-1 border-r border-[#b00000]">
            {MONTHS.map(([name, from, to], i) => (
              <span key={i} className={clsx("w-0 whitespace-nowrap pl-0.5", i > 0 && "border-l border-[#b00000]")} style={{ flexGrow: to - from }}>
                {name}
              </span>
            ))}
          </div>
          <button className="w-[50px] text-[#c0c0c0]">日线</button>
        </footer>

        <div className="pointer-events-none absolute inset-0">
          <svg className="absolute inset-0 size-full" viewBox="0 0 1445 958" preserveAspectRatio="none" fill="#ffff00" stroke="#ffff00">
            <path d="M356 136L300 34M1152 124.5H1362M1240 132L1173 480M1079 852L1364 614" strokeWidth="2" fill="none" />
            <g stroke="none">
              <path d="M293 20L307 36L300 34L296 39Z" />
              <path d="M1374 124.5L1355 118.5L1360 124.5L1355 130.5Z" />
              <path d="M1170 496L1163 477L1172 482L1179 479Z" />
              <path d="M1375 605L1357 612L1364 614L1366 623Z" />
            </g>
            <path d="M1236 722L1237 746L1242 742L1268 788L1291 829L1293 828L1271 783L1248 737L1255 737Z" fill="#ff0000" stroke="#fff" strokeWidth="1.2" />
          </svg>
          <span className="absolute top-[39px] left-[1324px] text-xs leading-4">17.78</span>
          <span className="absolute top-[459px] left-[446px] text-xs leading-4">10.06</span>
          <span className="absolute top-[428px] left-[1041px] text-xs leading-4">10.76 - 10.78</span>
          <div className="absolute top-[471px] left-[1207px] flex text-[13px] leading-[13px] text-white">
            <span className="mr-3.5 bg-[#304878]">财</span>
            <span className="mr-[5px] bg-[#c04810]">预</span>
            <span className="bg-[#008000]">减</span>
          </div>
          <span className="absolute right-[55px] bottom-0.5 h-[15px] w-[15px] bg-[#401080] text-center text-xs leading-3.5 text-white">--</span>
          <Callout className="top-[134px] left-[320px] flex gap-3.5 text-[28px] leading-9">
            <span>日</span>
            <span>线</span>
          </Callout>
          <Callout className="top-16 left-[1149px] text-xl leading-[26px]">
            <p>高点后一直没有突破...</p>
            <p>直到今天...</p>
          </Callout>
          <Callout className="top-[261px] left-[555px] text-xl leading-[26px]">
            {NOTE.map((line) => (
              <p key={line}>{line}</p>
            ))}
          </Callout>
          <Callout className="top-[828px] left-[1243px] text-xl leading-[26px]">确立大趋势...</Callout>
        </div>
      </main>
      <QuotePanel />
    </div>
  );
}
